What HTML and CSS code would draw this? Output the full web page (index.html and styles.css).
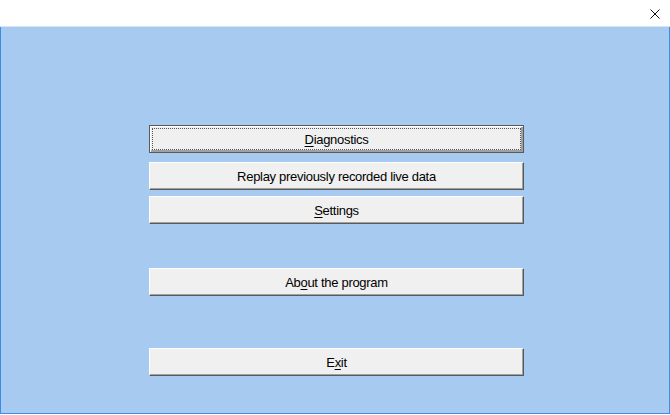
FILE: index.html
```html
<!DOCTYPE html>
<html lang="en">

<head>
  <meta charset="UTF-8">
  <meta name="viewport" content="width=device-width, initial-scale=1.0">
  <title>Main menu</title>
  <link rel="stylesheet" href="styles.css">
</head>

<body>
  <div class="window">
    <div class="titlebar">
      <span class="close">
        <svg width="10" height="10" viewBox="0 0 10 10">
          <path d="M0.5 0.5 L9.5 9.5 M9.5 0.5 L0.5 9.5" stroke="#111" stroke-width="1" fill="none" />
        </svg>
      </span>
    </div>

    <div class="client">
      <div class="menu">
        <button class="btn default"><span class="focus"><u>D</u>iagnostics</span></button>
        <button class="btn gap-s">Replay previously recorded live data</button>
        <button class="btn gap-xs"><u>S</u>ettings</button>
        <button class="btn gap-l">Ab<u>o</u>ut the program</button>
        <button class="btn gap-xl">E<u>x</u>it</button>
      </div>
    </div>
  </div>
</body>

</html>
```

FILE: styles.css
```css
/* classic dialog look */
body {
  margin: 0;
  padding: 0;
  font-family: "Liberation Sans", Arial, sans-serif;
  background-color: #fff;
}

.window {
  width: 670px;
  height: 415px;
  display: flex;
  flex-direction: column;
}

.titlebar {
  height: 26px;
  background-color: #fff;
  display: flex;
  justify-content: flex-end;
  align-items: center;
  border-bottom: 1px solid #d4e5f7;
}

.close {
  width: 28px;
  display: flex;
  justify-content: center;
  padding-top: 1px;
  margin-right: 1px;
}

.client {
  flex: 1;
  background-color: #a6caf0;
  border-left: 1px solid #3b8ee6;
  border-right: 1px solid #3b8ee6;
  border-bottom: 1px solid #3b8ee6;
  margin-bottom: 1px;
}

.menu {
  display: flex;
  flex-direction: column;
  align-items: flex-start;
  padding-top: 98px;
  padding-left: 148px;
}

.btn {
  width: 375px;
  height: 28px;
  padding: 0;
  background-color: #f0f0f0;
  border: 1px solid;
  border-color: #fff #5a5a5a #5a5a5a #fff;
  box-shadow: inset -1px -1px 0 #a0a0a0;
  font-family: "Liberation Sans", Arial, sans-serif;
  font-size: 13px;
  letter-spacing: -0.3px;
  color: #000;
  display: flex;
  justify-content: center;
  align-items: center;
}

.btn u {
  text-underline-offset: 2px;
}

.default {
  border: 1px solid #5a5a5a;
  box-shadow: inset 1px 1px 0 #fff, inset -2px -2px 0 #a0a0a0;
  padding: 2px;
}

.focus {
  flex: 1;
  align-self: stretch;
  display: flex;
  justify-content: center;
  align-items: center;
  border: 1px dotted #555;
}

.gap-s {
  margin-top: 9px;
}

.gap-xs {
  margin-top: 6px;
}

.gap-l {
  margin-top: 44px;
}

.gap-xl {
  margin-top: 52px;
}
```
